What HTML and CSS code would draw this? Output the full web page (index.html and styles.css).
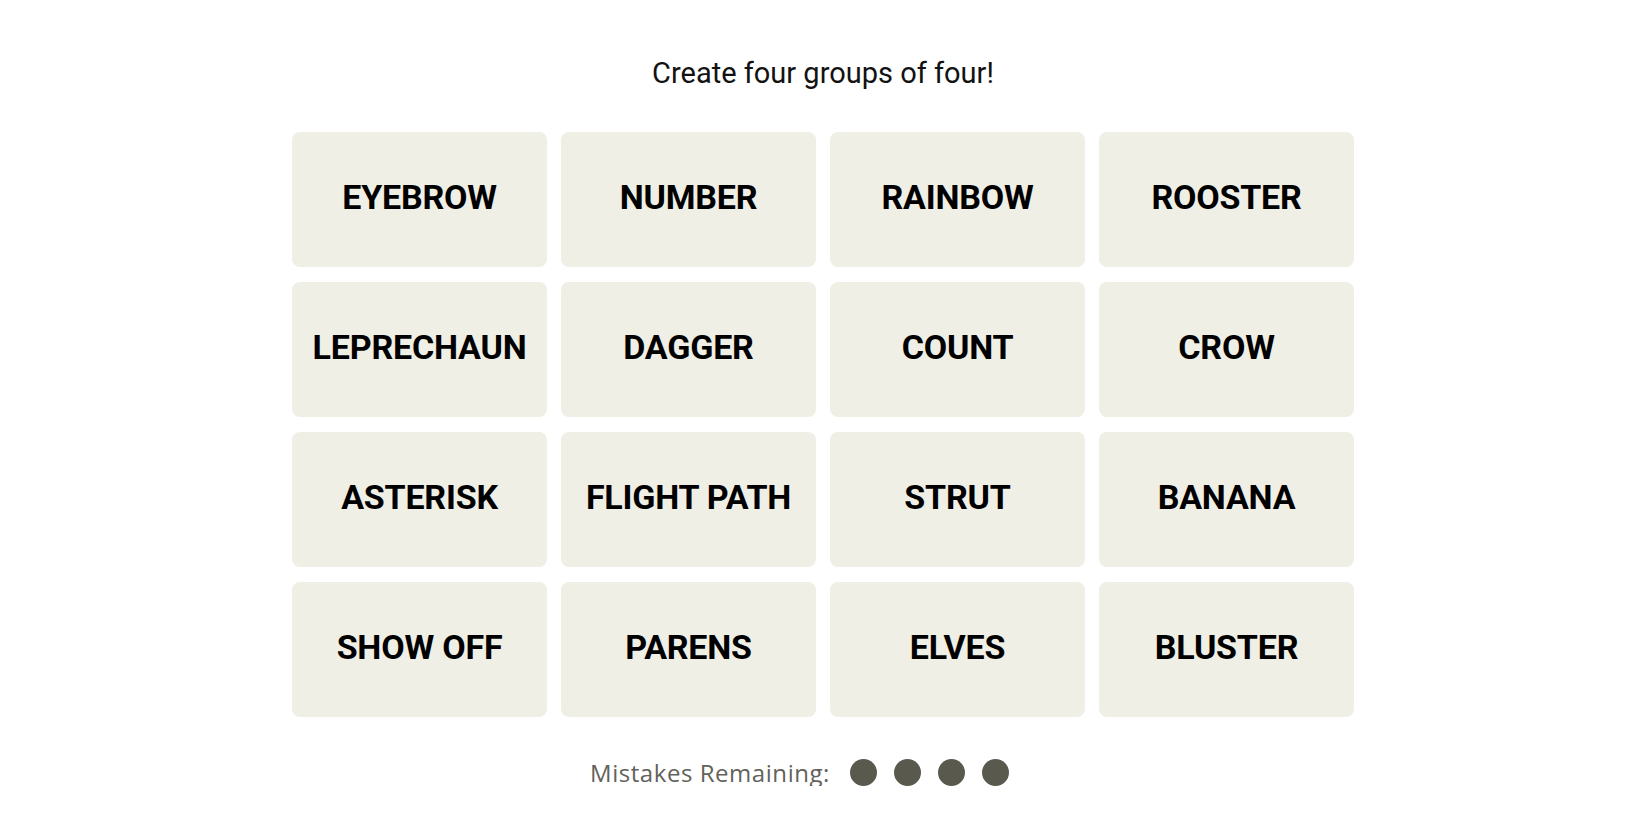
FILE: index.html
```html
<!DOCTYPE html>
<html lang="en">
<head>
<meta charset="utf-8">
<title>Connections</title>
<link rel="stylesheet" href="styles.css">
</head>
<body>
<main class="game">
  <p class="title">Create four groups of four!</p>
  <div class="board">
    <div class="tile">EYEBROW</div>
    <div class="tile">NUMBER</div>
    <div class="tile">RAINBOW</div>
    <div class="tile">ROOSTER</div>
    <div class="tile">LEPRECHAUN</div>
    <div class="tile">DAGGER</div>
    <div class="tile">COUNT</div>
    <div class="tile">CROW</div>
    <div class="tile">ASTERISK</div>
    <div class="tile">FLIGHT PATH</div>
    <div class="tile">STRUT</div>
    <div class="tile">BANANA</div>
    <div class="tile">SHOW OFF</div>
    <div class="tile">PARENS</div>
    <div class="tile">ELVES</div>
    <div class="tile">BLUSTER</div>
  </div>
  <div class="mistakes">
    <span class="mistakes-label">Mistakes Remaining:</span>
    <span class="dots">
      <span class="dot"></span>
      <span class="dot"></span>
      <span class="dot"></span>
      <span class="dot"></span>
    </span>
  </div>
</main>
</body>
</html>
```
FILE: styles.css
```css
html, body {
  margin: 0;
  padding: 0;
  background: #ffffff;
}

.game {
  display: flex;
  flex-direction: column;
  align-items: center;
  padding: 56px 4px 0 0;
  font-family: Roboto, "Liberation Sans", sans-serif;
}

.title {
  margin: 0;
  font-size: 29px;
  line-height: 34px;
  font-weight: 400;
  color: #121212;
}

.board {
  margin-top: 42px;
  display: grid;
  grid-template-columns: repeat(4, 255px);
  grid-auto-rows: 135px;
  column-gap: 14px;
  row-gap: 15px;
}

.tile {
  display: flex;
  align-items: center;
  justify-content: center;
  padding-bottom: 6px;
  box-sizing: border-box;
  background: #efefe6;
  border-radius: 8px;
  font-size: 34px;
  font-weight: 700;
  letter-spacing: -0.2px;
  color: #000000;
  white-space: nowrap;
}

.mistakes {
  margin-top: 41px;
  display: flex;
  align-items: center;
  gap: 20px;
  height: 28px;
}

.mistakes-label {
  font-family: "Open Sans", Lato, sans-serif;
  font-weight: 400;
  font-size: 24px;
  color: #63625a;
  letter-spacing: 0.55px;
}

.dots {
  display: flex;
  gap: 17px;
  padding-right: 47px;
}

.dot {
  width: 27px;
  height: 27px;
  border-radius: 50%;
  background: #5a594e;
}
```
